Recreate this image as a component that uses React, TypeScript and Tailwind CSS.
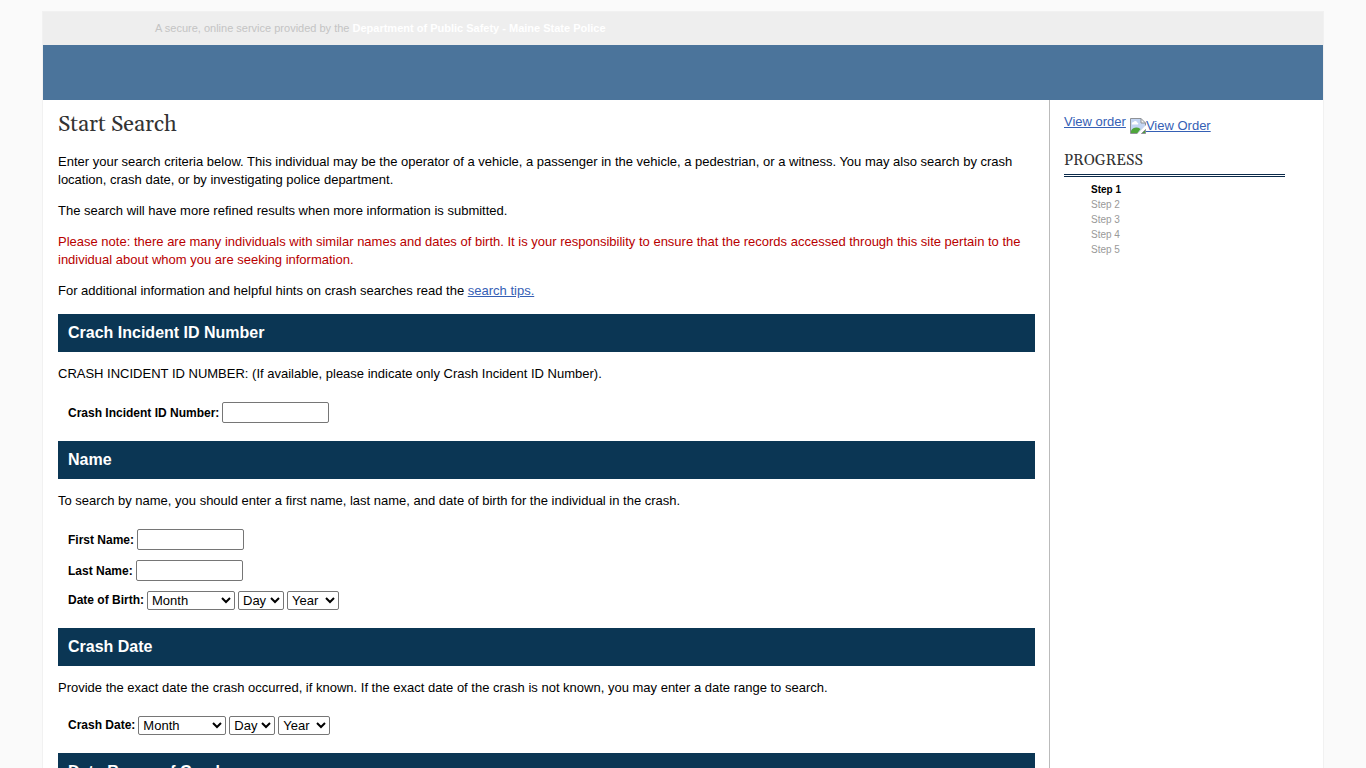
import React from "react";

const MONTHS = [
  "January",
  "February",
  "March",
  "April",
  "May",
  "June",
  "July",
  "August",
  "September",
  "October",
  "November",
  "December",
];
const DAYS = Array.from({ length: 31 }, (_, i) => String(i + 1));
const YEARS = Array.from({ length: 100 }, (_, i) => String(2024 - i));

const STEPS = ["Step 1", "Step 2", "Step 3", "Step 4", "Step 5"];

const selectClass =
  "h-[19px] rounded-[2px] border border-[#767676] bg-white text-[13px] text-black";

function SectionTitle({ children }: { children: React.ReactNode }) {
  return (
    <h2 className="bg-[#0b3654] px-[10px] py-[7px] text-base leading-6 font-bold text-white">
      {children}
    </h2>
  );
}

function Section({
  title,
  intro,
  children,
}: {
  title: string;
  intro: string;
  children: React.ReactNode;
}) {
  return (
    <section className="pb-[18px]">
      <SectionTitle>{title}</SectionTitle>
      <p className="mt-[13px]">{intro}</p>
      <div className="mt-[19px] flex flex-col gap-[10px] px-[10px]">
        {children}
      </div>
    </section>
  );
}

function TextField({ id, label }: { id: string; label: string }) {
  return (
    <div className="flex items-center gap-[3px]">
      <label htmlFor={id} className="text-xs font-bold">
        {label}
      </label>
      <input
        id={id}
        type="text"
        className="h-[21px] w-[107px] rounded-[2px] border border-[#767676] bg-white px-1 text-[13px]"
      />
    </div>
  );
}

function DateField({ id, label }: { id: string; label: string }) {
  return (
    <div className="flex items-center gap-[3px]">
      <label htmlFor={id} className="text-xs leading-[19px] font-bold">
        {label}
      </label>
      <select id={id} className={`${selectClass} w-[88px]`}>
        <option>Month</option>
        {MONTHS.map((m) => (
          <option key={m}>{m}</option>
        ))}
      </select>
      <select aria-label={`${label} day`} className={`${selectClass} w-[46px]`}>
        <option>Day</option>
        {DAYS.map((d) => (
          <option key={d}>{d}</option>
        ))}
      </select>
      <select aria-label={`${label} year`} className={`${selectClass} w-[52px]`}>
        <option>Year</option>
        {YEARS.map((y) => (
          <option key={y}>{y}</option>
        ))}
      </select>
    </div>
  );
}

function MissingImageIcon() {
  return (
    <svg width="16" height="16" viewBox="0 0 16 16" aria-hidden="true">
      <path d="M0.5 0.5H11L15.5 5V9L8.5 15.5H0.5Z" fill="#c3d5f3" />
      <path d="M2 6.5a1.8 1.8 0 0 1 1.6-2.6a2 2 0 0 1 3.6 0.6a1.3 1.3 0 0 1 0.8 2Z" fill="#fff" />
      <path d="M1 15V12.5C3 9.5 7 8.5 10.5 11L7.5 15Z" fill="#4ea53a" />
      <path d="M15.5 5V8.5L8 15.5H0.5V0.5H11" fill="none" stroke="#8f9296" />
      <path d="M11 0.5V5H15.5Z" fill="#f4f4f4" stroke="#8f9296" />
      <path d="M16 7L7 16H10L16 10.5Z" fill="#fff" />
      <path d="M15.5 11.5V15.5H11.5Z" fill="#4ea53a" stroke="#8f9296" />
    </svg>
  );
}

function Sidebar() {
  return (
    <aside className="w-[274px] shrink-0 border-l border-[#bbbbbb] pt-[13px] pr-[38px] pl-[14px]">
      <div className="flex items-start gap-1 text-[13px] leading-[18px] text-[#3560b5]">
        <a href="#order" className="underline">
          View order
        </a>
        <a href="#order" className="flex items-center pt-1 underline">
          <MissingImageIcon />
          View Order
        </a>
      </div>
      <h2 className="mt-[15px] border-b-3 border-double border-[#0b2a4a] pb-[2px] font-[Georgia,Gelasio,'Liberation_Serif',serif] text-[15px] leading-[22px] text-[#333333] uppercase">
        Progress
      </h2>
      <ol className="mt-[5px] pl-[27px] text-[10px] leading-[15px] text-[#999999]">
        {STEPS.map((step, i) => (
          <li key={step} className={i === 0 ? "font-bold text-black" : ""}>
            {step}
          </li>
        ))}
      </ol>
    </aside>
  );
}

export default function App() {
  return (
    <div className="min-h-screen bg-[#fafafa] pt-3 font-['Liberation_Sans',Arial,sans-serif] text-[13px] leading-[18px] text-black">
      <div className="mx-auto max-w-7xl bg-white outline-1 outline-[#f1f1f1]">
        <div className="bg-[#eeeeee] py-2 pl-28 text-[11px] leading-[17px] text-[#c4c4c4]">
          A secure, online service provided by the{" "}
          <a href="#dps" className="font-bold text-white">
            Department of Public Safety - Maine State Police
          </a>
        </div>
        <header className="h-[55px] bg-[#4b749b]" />

        <div className="flex">
          <main className="min-w-0 flex-1 pt-[9px] pr-[14px] pl-[15px]">
            <h1 className="font-[Georgia,Gelasio,'Liberation_Serif',serif] text-[22px] leading-8 text-[#333333]">
              Start Search
            </h1>
            <div className="mt-3 mb-[14px] flex flex-col gap-[13px]">
              <p>
                Enter your search criteria below. This individual may be the
                operator of a vehicle, a passenger in the vehicle, a pedestrian,
                or a witness. You may also search by crash location, crash date,
                or by investigating police department.
              </p>
              <p>The search will have more refined results when more information is submitted.</p>
              <p className="text-[#b80000]">
                Please note: there are many individuals with similar names and
                dates of birth. It is your responsibility to ensure that the
                records accessed through this site pertain to the individual
                about whom you are seeking information.
              </p>
              <p>
                For additional information and helpful hints on crash searches
                read the{" "}
                <a href="#tips" className="text-[#3560b5] underline">
                  search tips.
                </a>
              </p>
            </div>

            <form>
              <Section
                title="Crach Incident ID Number"
                intro="CRASH INCIDENT ID NUMBER: (If available, please indicate only Crash Incident ID Number)."
              >
                <TextField id="incident-id" label="Crash Incident ID Number:" />
              </Section>
              <Section
                title="Name"
                intro="To search by name, you should enter a first name, last name, and date of birth for the individual in the crash."
              >
                <TextField id="first-name" label="First Name:" />
                <TextField id="last-name" label="Last Name:" />
                <DateField id="birth-date" label="Date of Birth:" />
              </Section>
              <Section
                title="Crash Date"
                intro="Provide the exact date the crash occurred, if known. If the exact date of the crash is not known, you may enter a date range to search."
              >
                <DateField id="crash-date" label="Crash Date:" />
              </Section>
              <SectionTitle>Date Range of Crash</SectionTitle>
            </form>
          </main>
          <Sidebar />
        </div>
      </div>
    </div>
  );
}
